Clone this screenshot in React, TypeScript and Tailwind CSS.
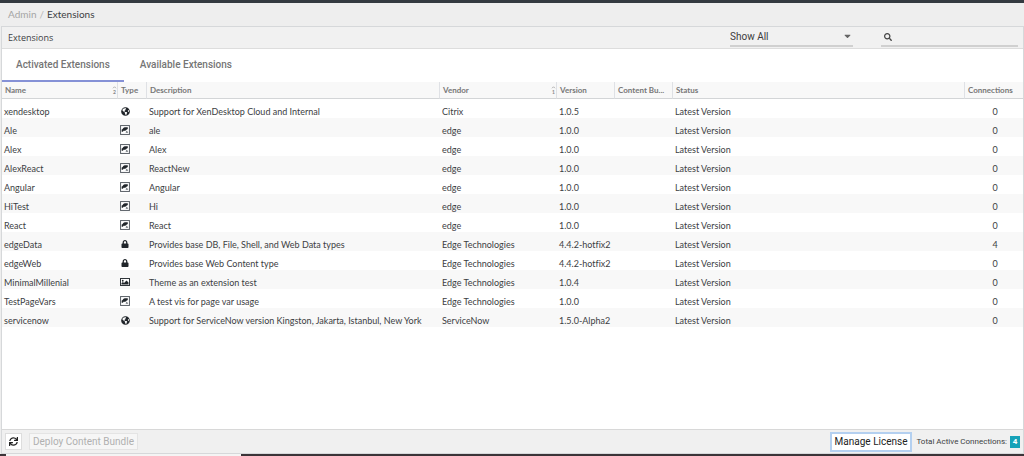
import { useState } from 'react';
import type { ReactNode } from 'react';
import { FaCaretDown, FaGlobeAmericas, FaLock, FaSearch, FaSync } from 'react-icons/fa';

type ExtensionType = 'globe' | 'vis' | 'lock' | 'theme';

interface Extension {
  name: string;
  type: ExtensionType;
  description: string;
  vendor: string;
  version: string;
  connections: number;
}

const EXTENSIONS: Extension[] = [
  { name: 'xendesktop', type: 'globe', description: 'Support for XenDesktop Cloud and Internal', vendor: 'Citrix', version: '1.0.5', connections: 0 },
  { name: 'Ale', type: 'vis', description: 'ale', vendor: 'edge', version: '1.0.0', connections: 0 },
  { name: 'Alex', type: 'vis', description: 'Alex', vendor: 'edge', version: '1.0.0', connections: 0 },
  { name: 'AlexReact', type: 'vis', description: 'ReactNew', vendor: 'edge', version: '1.0.0', connections: 0 },
  { name: 'Angular', type: 'vis', description: 'Angular', vendor: 'edge', version: '1.0.0', connections: 0 },
  { name: 'HiTest', type: 'vis', description: 'Hi', vendor: 'edge', version: '1.0.0', connections: 0 },
  { name: 'React', type: 'vis', description: 'React', vendor: 'edge', version: '1.0.0', connections: 0 },
  { name: 'edgeData', type: 'lock', description: 'Provides base DB, File, Shell, and Web Data types', vendor: 'Edge Technologies', version: '4.4.2-hotfix2', connections: 4 },
  { name: 'edgeWeb', type: 'lock', description: 'Provides base Web Content type', vendor: 'Edge Technologies', version: '4.4.2-hotfix2', connections: 0 },
  { name: 'MinimalMillenial', type: 'theme', description: 'Theme as an extension test', vendor: 'Edge Technologies', version: '1.0.4', connections: 0 },
  { name: 'TestPageVars', type: 'vis', description: 'A test vis for page var usage', vendor: 'Edge Technologies', version: '1.0.0', connections: 0 },
  { name: 'servicenow', type: 'globe', description: 'Support for ServiceNow version Kingston, Jakarta, Istanbul, New York', vendor: 'ServiceNow', version: '1.5.0-Alpha2', connections: 0 },
];

function VisIcon() {
  return (
    <svg viewBox="0 0 18 18" className="h-[10px] w-[10px]" aria-hidden="true">
      <rect x="1" y="1" width="16" height="16" fill="#fff" stroke="#5a6067" strokeWidth="1.8" />
      <path d="M3 12V8c2 0 3-4 6-4h5v3l-3 2-2 2-2-1-2 2z" fill="#20252a" />
      <path d="M10 14l2-4 3 4z" fill="#6b7177" />
    </svg>
  );
}

function ThemeIcon() {
  return (
    <svg viewBox="0 0 20 18" className="h-[10px] w-[10px]" aria-hidden="true">
      <rect x="1" y="2" width="18" height="14" fill="#fff" stroke="#30353a" strokeWidth="2" />
      <circle cx="5.5" cy="6.500" r="1.800" fill="#20252a" />
      <path d="M3 14v-3l3-2 2 2 5-5 4 4v4z" fill="#20252a" />
    </svg>
  );
}

const TYPE_ICONS: Record<ExtensionType, ReactNode> = {
  globe: <FaGlobeAmericas className="h-[9px] w-[9px]" />,
  vis: <VisIcon />,
  lock: <FaLock className="h-2 w-2" />,
  theme: <ThemeIcon />,
};

// Sort arrow with the column's place in the sort order below it
function SortMark({ order }: { order: number }) {
  return (
    <span className="flex flex-col items-center text-[5px] leading-[6px] font-bold text-[#888]">
      <svg viewBox="0 0 6 4" className="h-[3px] w-[5px]" aria-hidden="true">
        <path d="M1 3l2-2 2 2" fill="none" stroke="#999" />
      </svg>
      {order}
    </span>
  );
}

function HeaderCell({ label, sort, last }: { label: string; sort?: number; last?: boolean }) {
  return (
    <th
      scope="col"
      className={`h-[17px] border-b border-b-[#d3d5d7] p-0 text-left font-bold ${last ? '' : 'border-r border-r-[#dfe1e5]'}`}
    >
      <div className="flex items-center justify-between pl-[3px]">
        <span className="whitespace-nowrap">{label}</span>
        {sort && <SortMark order={sort} />}
      </div>
    </th>
  );
}

export default function App() {
  const [tab, setTab] = useState<'activated' | 'available'>('activated');
  const [query, setQuery] = useState('');

  const rows = EXTENSIONS.filter((ext) => ext.name.toLowerCase().includes(query.toLowerCase()));
  const tabClass = 'h-full border-b-2 px-[14px] text-[10px] font-medium text-[#757575]';

  return (
    <div className="flex min-h-screen flex-col border-t-[3px] border-[#343a40] bg-[#eeeeee] font-['Open_Sans',sans-serif] text-[9px] text-[#3c4043]">
      <nav aria-label="Breadcrumb" className="flex h-[23px] items-center gap-[3px] px-2 font-[Lato] text-[10px]">
        <a href="#admin" className="text-[#a5a5a5]">Admin</a>
        <span className="text-[#b5b5b5]">/</span>
        <span>Extensions</span>
      </nav>

      <main className="ml-px flex flex-1 flex-col border border-[#d6d8da] bg-white">
        <header className="flex h-[22px] items-center border-b border-[#dddddd] bg-[#f1f1f1] pr-[5px] pl-[6px]">
          <h1 className="flex-1 text-[9px]">Extensions</h1>
          <div className="relative mr-7 w-[123px]">
            <select
              aria-label="Filter extensions"
              className="block h-[18px] w-full appearance-none border-b-2 border-[#d0d0d0] bg-transparent pb-0.5 font-[Roboto] text-[10px] text-[#3c3c3c] outline-none"
            >
              <option>Show All</option>
            </select>
            <FaCaretDown className="pointer-events-none absolute top-[2px] right-px h-[10px] w-[9px] text-[#666]" />
          </div>
          <label className="flex h-[18px] w-[137px] items-center gap-1 border-b-2 border-[#d0d0d0] pl-[3px]">
            <FaSearch className="h-2 w-2 shrink-0 text-[#444]" />
            <input
              type="search"
              aria-label="Search"
              value={query}
              onChange={(e) => setQuery(e.target.value)}
              className="w-full min-w-0 bg-transparent outline-none"
            />
          </label>
        </header>

        <div role="tablist" className="flex h-[33px] gap-[2px] font-[Roboto]">
          <button
            type="button"
            role="tab"
            aria-selected={tab === 'activated'}
            onClick={() => setTab('activated')}
            className={`${tabClass} ${tab === 'activated' ? 'border-[#8591d6]' : 'border-transparent'}`}
          >
            Activated Extensions
          </button>
          <button
            type="button"
            role="tab"
            aria-selected={tab === 'available'}
            onClick={() => setTab('available')}
            className={`${tabClass} ${tab === 'available' ? 'border-[#8591d6]' : 'border-transparent'}`}
          >
            Available Extensions
          </button>
        </div>

        <table className="w-full table-fixed border-separate border-spacing-0">
          <colgroup>
            <col className="w-[116px]" />
            <col className="w-[29px]" />
            <col className="w-[293px]" />
            <col className="w-[117px]" />
            <col className="w-[58px]" />
            <col className="w-[58px]" />
            <col />
            <col className="w-[58px]" />
          </colgroup>
          <thead className="bg-[#f8f8f8] font-[Lato] text-[8px] leading-[16px] text-[#777]">
            <tr>
              <HeaderCell label="Name" sort={2} />
              <HeaderCell label="Type" />
              <HeaderCell label="Description" />
              <HeaderCell label="Vendor" sort={1} />
              <HeaderCell label="Version" />
              <HeaderCell label="Content Bu..." />
              <HeaderCell label="Status" />
              <HeaderCell label="Connections" last />
            </tr>
          </thead>
          <tbody className="font-[Lato] leading-[13px] [font-variant-ligatures:none]">
            {rows.map((ext) => (
              <tr key={ext.name} className="h-[19px] even:bg-[#f8f8f8] *:p-0 *:pt-[5px] *:pl-0.5 *:whitespace-nowrap">
                <td>{ext.name}</td>
                <td className="text-[#20252a]">
                  <span className="flex w-[10px] justify-center">{TYPE_ICONS[ext.type]}</span>
                </td>
                <td>{ext.description}</td>
                <td>{ext.vendor}</td>
                <td>{ext.version}</td>
                <td />
                <td>Latest Version</td>
                <td className="text-center">{ext.connections}</td>
              </tr>
            ))}
          </tbody>
        </table>

        <footer className="mt-auto flex h-6 items-center border-t border-[#d8d8d8] bg-[#f0f0f0] px-[3px] font-[Roboto]">
          <button
            type="button"
            aria-label="Refresh"
            className="flex h-[17px] w-[17px] items-center justify-center border border-[#dddddd] bg-white text-[#222]"
          >
            <FaSync className="h-[9px] w-[9px]" />
          </button>
          <button
            type="button"
            disabled
            className="ml-[7px] h-[17px] border border-[#e4e4e4] bg-[#f6f6f6] px-[3px] text-[10px] text-[#b0b0b0]"
          >
            Deploy Content Bundle
          </button>
          <button
            type="button"
            className="ml-auto h-[18px] border border-[#b4d0f0] bg-white px-[3px] text-[10px] text-[#222] ring-1 ring-[#b4d0f0]"
          >
            Manage License
          </button>
          <span className="ml-[5px] text-[8px]">Total Active Connections:</span>
          <span className="ml-[3px] flex h-3 w-[10px] items-center justify-center bg-[#17a2b8] text-[8px] font-bold text-white">4</span>
        </footer>
      </main>

      <div className="flex h-0.5 bg-[#3b3438]">
        <div className="ml-[6px] w-[235px] bg-[#f4f4f4]" />
      </div>
    </div>
  );
}
